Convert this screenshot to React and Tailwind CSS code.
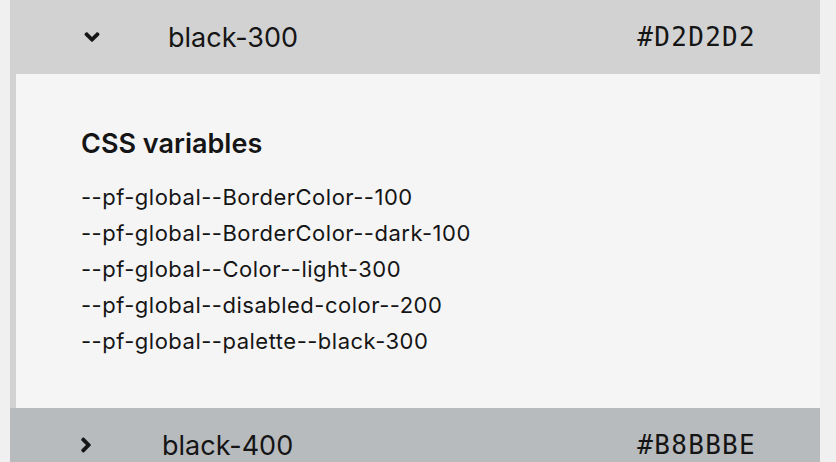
import React from "react";
import { FaAngleDown, FaAngleRight } from "react-icons/fa";

const vars = [
  "--pf-global--BorderColor--100",
  "--pf-global--BorderColor--dark-100",
  "--pf-global--Color--light-300",
  "--pf-global--disabled-color--200",
  "--pf-global--palette--black-300",
];

const mono = { fontFamily: "'DejaVu Sans Mono', 'Liberation Mono', monospace" };

export default function App() {
  return (
    <div
      className="w-[836px] h-[462px] overflow-hidden bg-[#f0f0f0] pl-[10px] pr-[16px] text-[#151515]"
      style={{ fontFamily: "Inter, 'Noto Sans', sans-serif" }}
    >
      <div className="flex flex-col">
        <div className="border-l-[6px] border-[#d2d2d2]">
          <div className="h-[74px] bg-[#d2d2d2] flex items-center">
            <div className="w-[152px] flex items-center">
              <div className="ml-[60px] w-[32px] flex justify-center">
                <FaAngleDown size={24} />
              </div>
            </div>
            <span className="text-[27px] leading-none flex-1">black-300</span>
            <span className="mr-[64px] text-[26px] leading-none tracking-[1.3px]" style={mono}>
              #D2D2D2
            </span>
          </div>
          <div className="h-[334px] bg-[#f5f5f5] pl-[65px] pt-[56px]">
            <h2 className="text-[27px] font-semibold leading-none">CSS variables</h2>
            <ul className="mt-[22px] flex flex-col">
              {vars.map((v) => (
                <li key={v} className="text-[22px] leading-[36px] tracking-[0.5px]">
                  {v}
                </li>
              ))}
            </ul>
          </div>
        </div>
        <div className="h-[74px] bg-[#b8bbbe] flex items-center">
          <div className="w-[152px] flex items-center">
            <div className="ml-[60px] w-[32px] flex justify-center">
              <FaAngleRight size={24} />
            </div>
          </div>
          <span className="text-[27px] leading-none flex-1">black-400</span>
          <span className="mr-[64px] text-[26px] leading-none tracking-[1.3px]" style={mono}>
            #B8BBBE
          </span>
        </div>
      </div>
    </div>
  );
}
